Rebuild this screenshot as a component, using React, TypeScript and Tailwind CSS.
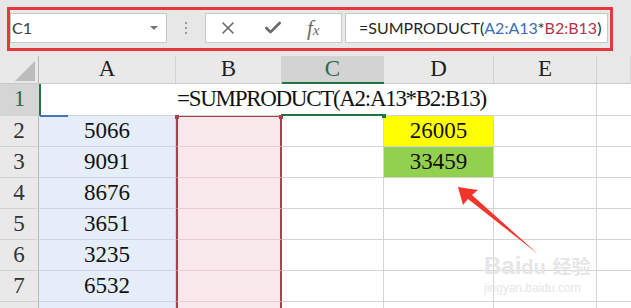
import { X, Check } from 'lucide-react'

const serif = { fontFamily: '"Liberation Serif", "Times New Roman", serif' }
const sans = { fontFamily: 'Lato, "Liberation Sans", sans-serif' }

// column widths incl. right gridline: row header, A..E, F
const W = ['w-[39px]', 'w-[137px]', 'w-[106px]', 'w-[102px]', 'w-[110px]', 'w-[103px]', 'flex-1']

const colA = ['5066', '9091', '8676', '3651', '3235', '6532', '']

function FormulaBar() {
  return (
    <div className="h-[56px] bg-[#e7e7e7] flex items-start pt-[13px] pl-[10px]">
      <div className="w-[157px] h-[30px] bg-white border border-[#c8c8c8] flex items-center justify-between pl-[1px] pr-[8px]">
        <span className="text-[16px] text-[#3a3a3a] leading-none" style={sans}>C1</span>
        <span className="w-0 h-0 border-l-[4px] border-r-[4px] border-t-[4px] border-l-transparent border-r-transparent border-t-[#777]" />
      </div>
      <div className="w-[38px] h-[30px] flex flex-col items-center justify-center gap-[3px]">
        <span className="w-[2px] h-[2px] bg-[#9a9a9a]" />
        <span className="w-[2px] h-[2px] bg-[#9a9a9a]" />
        <span className="w-[2px] h-[2px] bg-[#9a9a9a]" />
      </div>
      <div className="w-[137px] h-[30px] bg-white border border-[#c8c8c8] flex items-center pl-[12px] text-[#6a6a6a]">
        <X size={20} strokeWidth={2} />
        <Check size={20} strokeWidth={3.2} className="ml-[25px]" />
        <span className="ml-[24px] italic text-[21px] leading-none" style={serif}>
          f<span className="text-[15px]">x</span>
        </span>
      </div>
      <div className="ml-[3px] w-[263px] h-[30px] bg-white border border-[#c8c8c8] flex items-center pl-[13px] text-[16px] text-[#262626]" style={sans}>
        =SUMPRODUCT(<span className="text-[#3b6db3]">A2:A13</span>*<span className="text-[#b3334a]">B2:B13</span>)
      </div>
    </div>
  )
}

function HeaderRow() {
  const letters = ['A', 'B', 'C', 'D', 'E', '']
  return (
    <div className="flex h-[28px] bg-[#e9e9e9] border-b border-[#c9c9c9]" style={serif}>
      <div className={`${W[0]} relative border-r border-[#b8b8b8]`}>
        <svg className="absolute left-0 top-0" width="38" height="28">
          <polygon points="35,5 35,25 15,25" fill="#bcbcbc" />
        </svg>
      </div>
      {letters.map((l, i) => (
        <div
          key={i}
          className={`${W[i + 1]} flex items-center justify-center text-[23px] border-r border-[#d2d2d2] ${
            l === 'C' ? 'bg-[#d3d3d3] text-[#2a6b4b]' : 'text-[#1f1f1f]'
          }`}>
          {l}
        </div>
      ))}
    </div>
  )
}

function DataRow({ n, a }: { n: number; a: string }) {
  return (
    <div className="flex h-[31px] text-[23px] text-[#111]" style={serif}>
      <div className={`${W[0]} flex items-center justify-center bg-[#e9e9e9] border-r border-b border-r-[#b8b8b8] border-b-[#d2d2d2] text-[#333]`}>
        {n < 8 ? n : ''}
      </div>
      <div className={`${W[1]} flex items-center justify-center bg-[#e5edf8] border-r border-b border-[#cfd6e1]`}>{a}</div>
      <div className={`${W[2]} bg-[#f9e8e9] border-l-2 border-r-2 border-l-[#a8404f] border-r-[#a8404f] border-b border-b-[#e3cfd1]`} />
      <div className={`${W[3]} border-r border-b border-[#d4d4d4]`} />
      <div
        className={`${W[4]} flex items-center justify-center border-r border-b border-[#d4d4d4] ${
          n === 2 ? 'bg-[#ffff00]' : n === 3 ? 'bg-[#92d050]' : ''
        }`}>
        {n === 2 ? '26005' : n === 3 ? '33459' : ''}
      </div>
      <div className={`${W[5]} border-r border-b border-[#d4d4d4]`} />
      <div className={`${W[6]} border-b border-[#d4d4d4]`} />
    </div>
  )
}

export default function App() {
  return (
    <div className="relative w-[631px] h-[308px] overflow-hidden bg-white">
      <FormulaBar />
      <HeaderRow />

      {/* row 1: formula shown in C1, spilling over A..E */}
      <div className="flex h-[32px] text-[23px] text-[#111]" style={serif}>
        <div className={`${W[0]} flex items-center justify-center bg-[#d5d5d5] border-b border-[#d2d2d2] text-[#2a6b4b]`}>1</div>
        <div className="w-[558px] flex items-center justify-center pl-[26px] border-l-2 border-[#217346] border-r border-r-[#d4d4d4] border-b border-b-[#d4d4d4] tracking-[-1.3px]">
          =SUMPRODUCT(A2:A13*B2:B13)
        </div>
        <div className={`${W[6]} border-b border-[#d4d4d4]`} />
      </div>

      {colA.map((a, i) => (
        <DataRow key={i} n={i + 2} a={a} />
      ))}

      {/* selection marks */}
      <div className="absolute left-[282px] top-[82px] w-[102px] h-[2px] bg-[#217346]" />
      <div className="absolute left-[281px] top-[114px] w-[103px] h-[2px] bg-[#217346]" />
      <div className="absolute left-[382px] top-[114px] w-[4px] h-[4px] bg-[#217346]" />
      <div className="absolute left-[40px] top-[115px] w-[28px] h-[2px] bg-[#4a72b8]" />
      <div className="absolute left-[176px] top-[116px] w-[106px] h-[1px] bg-[#a8404f]" />
      <div className="absolute left-[175px] top-[115px] w-[4px] h-[4px] bg-[#a8404f]" />
      <div className="absolute left-[279px] top-[115px] w-[4px] h-[4px] bg-[#a8404f]" />

      {/* annotation box */}
      <div className="absolute left-[7px] top-[7px] w-[606px] h-[44px] border-[3px] border-[#e6373c]" />

      {/* arrow */}
      <svg className="absolute left-0 top-0" width="631" height="308">
        <polygon points="458,187 478,190 472,195 538,254 468,199 463,205" fill="#f2352a" />
      </svg>

      {/* watermark */}
      <div className="absolute left-[484px] top-[254px] text-[#e6e6e6] leading-none" style={{ fontFamily: '"Liberation Sans", "Noto Sans CJK SC", sans-serif' }}>
        <div className="text-[24px] font-bold">Bai<span className="text-[20px]">du</span> <span className="text-[19px]">经验</span></div>
        <div className="text-[12px] mt-[4px]">jingyan.baidu.com</div>
      </div>
    </div>
  )
}
